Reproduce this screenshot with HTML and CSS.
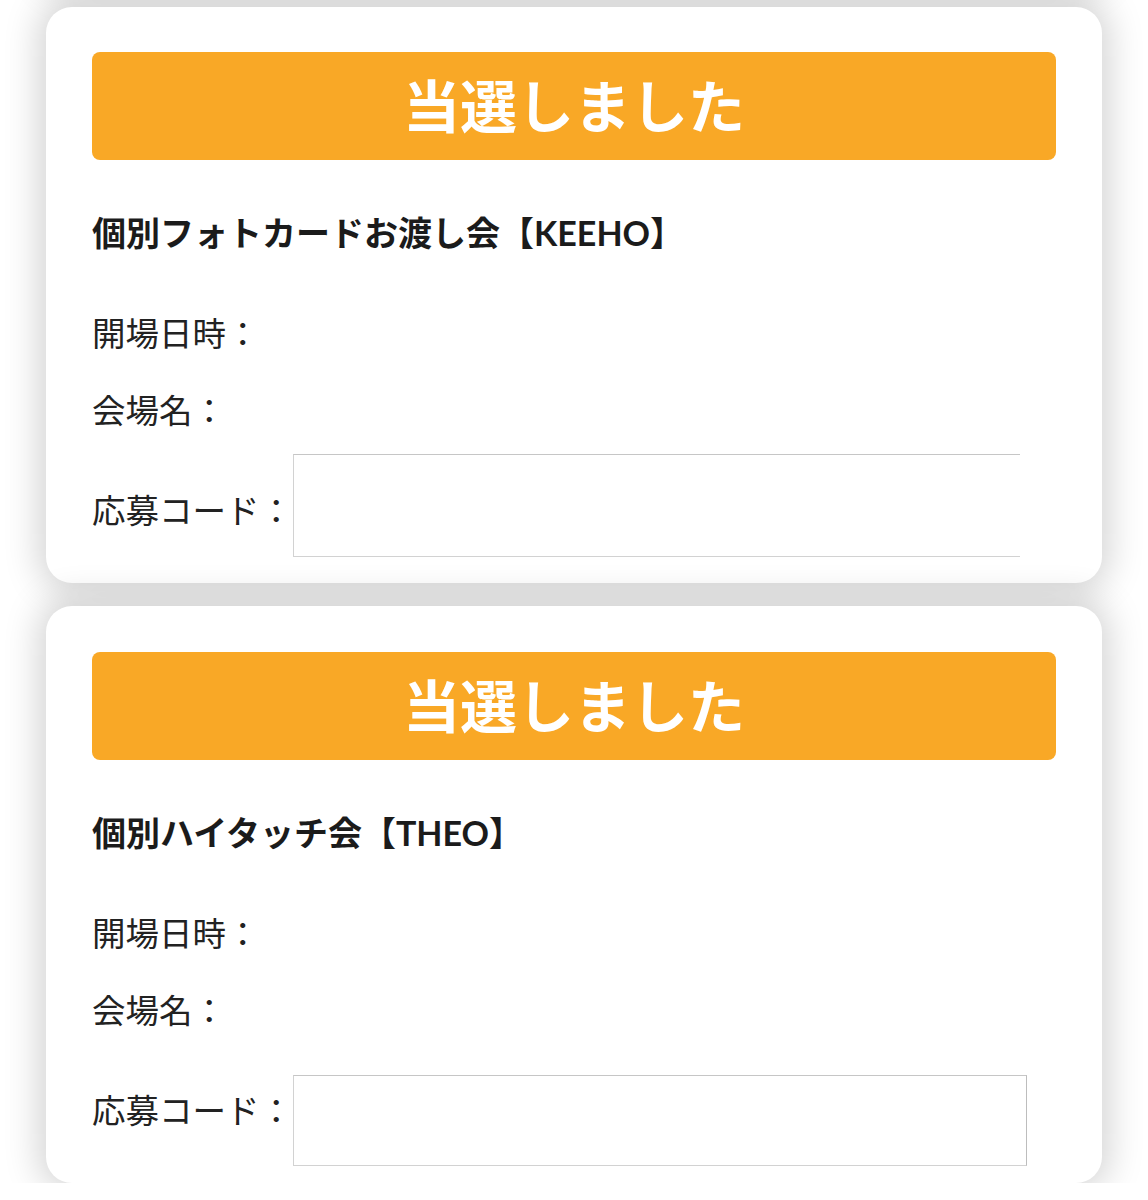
FILE: index.html
```html
<!DOCTYPE html>
<html lang="ja">
<head>
<meta charset="UTF-8">
<meta name="viewport" content="width=device-width, initial-scale=1.0">
<title>当選結果</title>
<link rel="stylesheet" href="styles.css">
</head>
<body>

<div class="list">
    <div class="card card-stub"></div>

    <div class="card card-first">
        <div class="result">当選しました</div>
        <h2 class="event-title">個別フォトカードお渡し会【KEEHO】</h2>
        <p class="field field-date">開場日時：</p>
        <p class="field">会場名：</p>
        <div class="code-row">
            <span class="field">応募コード：</span>
            <div class="code-box code-box-cut"></div>
        </div>
    </div>

    <div class="card card-second">
        <div class="result">当選しました</div>
        <h2 class="event-title">個別ハイタッチ会【THEO】</h2>
        <p class="field field-date">開場日時：</p>
        <p class="field">会場名：</p>
        <div class="code-row">
            <span class="field">応募コード：</span>
            <div class="code-box"></div>
        </div>
    </div>
</div>

</body>
</html>
```

FILE: styles.css
```css
body {
    font-family: Lato, "Noto Sans CJK JP", sans-serif;
    background: #fff;
    color: #222;
    margin: 0;
    padding: 0;
    overflow: hidden;
    text-spacing-trim: space-all;
}

.list {
    display: flex;
    flex-direction: column;
    gap: 23px;
    padding: 0 46px;
    margin-top: -100px;
}

.card {
    background: #fff;
    border-radius: 26px;
    box-shadow: 0 0 34px 8px rgba(0, 0, 0, 0.17);
    position: relative;
}

.card-stub {
    height: 84px;
}

.card-first {
    padding: 45px 46px 26px;
}

.card-second {
    padding: 46px 46px 17px;
}

.result {
    background: #f9a826;
    color: #fff;
    height: 108px;
    border-radius: 8px;
    display: flex;
    align-items: center;
    justify-content: center;
    font-size: 57px;
    font-weight: bold;
    padding-bottom: 6px;
    box-sizing: border-box;
}

.event-title {
    margin: 53px 0 0;
    font-size: 34px;
    line-height: 40px;
    font-weight: bold;
    color: #1b1b1b;
}

.field {
    margin: 37px 0 0;
    font-size: 33.5px;
    line-height: 40px;
    color: #222;
}

.field-date {
    margin-top: 60px;
}

.code-row {
    display: flex;
    align-items: flex-start;
}

.code-row .field {
    flex: none;
    width: 201px;
}

.card-first .code-row {
    margin-top: 24px;
}

.card-first .code-row .field {
    margin: 36px 0 0;
}

.card-second .code-row {
    margin-top: 45px;
}

.card-second .code-row .field {
    margin: 15px 0 0;
}

.code-box {
    box-sizing: border-box;
    height: 91px;
    width: 734px;
    border: 1px solid #d2d2d2;
    border-top-color: #c6c6c6;
    border-right-color: #bdbdbd;
    background: #fff;
}

.code-box-cut {
    height: 103px;
    width: 727px;
    border-right: none;
}
```
